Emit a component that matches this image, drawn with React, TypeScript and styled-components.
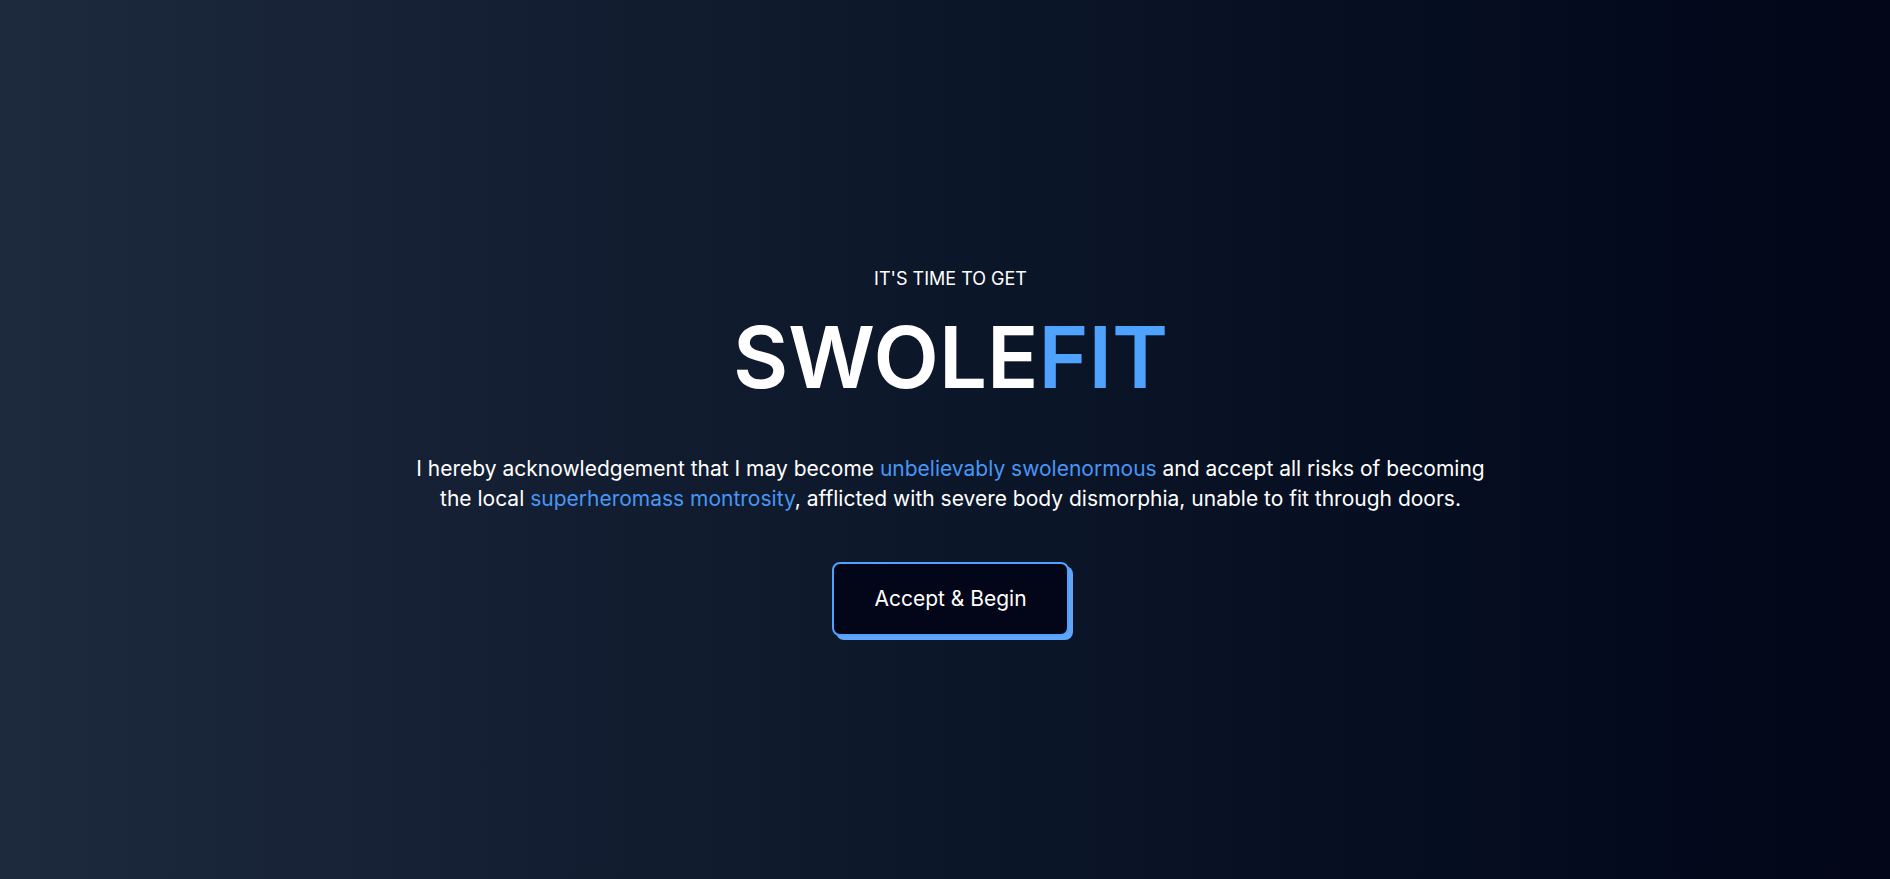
import React from "react";
import styled, { createGlobalStyle } from "styled-components";

const GlobalStyle = createGlobalStyle`
  *, *::before, *::after { box-sizing: border-box; }
  body {
    margin: 0;
    color: #ffffff;
    font-family: Inter, "Open Sans", "Liberation Sans", sans-serif;
    font-size: 21px;
    line-height: 30px;
  }
  h1, p { margin: 0; }
`;

const Page = styled.main`
  min-height: 100vh;
  display: flex;
  background: linear-gradient(to right in oklab, #1d293d, #020618);
`;

const Hero = styled.section`
  flex: 1;
  display: flex;
  flex-direction: column;
  align-items: center;
  justify-content: center;
  gap: 48px;
  padding: 29px 16px 8px 27px;
  text-align: center;
`;

const Heading = styled.div`
  display: flex;
  flex-direction: column;
  gap: 16px;
`;

const Kicker = styled.p`
  font-size: 18px;
  text-transform: uppercase;
`;

const Title = styled.h1`
  font-size: 85px;
  font-weight: 600;
  line-height: 96px;
`;

const Brand = styled.span`
  color: #50a2ff;
`;

const Copy = styled.p`
  max-width: 1100px;
`;

const Highlight = styled.span`
  color: #4896f5;
`;

const StartButton = styled.button`
  padding: 20px 40px;
  border: 2px solid #50a2ff;
  border-radius: 8px;
  background: #020618;
  box-shadow: 4px 4px 0 #60a5fa;
  color: inherit;
  font: inherit;
  cursor: pointer;
`;

export default function App() {
  return (
    <>
      <GlobalStyle />
      <Page>
        <Hero>
          <Heading>
            <Kicker>It's time to get</Kicker>
            <Title>
              SWOLE<Brand>FIT</Brand>
            </Title>
          </Heading>
          <Copy>
            I hereby acknowledgement that I may become{" "}
            <Highlight>unbelievably swolenormous</Highlight> and accept all
            risks of becoming the local{" "}
            <Highlight>superheromass montrosity</Highlight>, afflicted with
            severe body dismorphia, unable to fit through doors.
          </Copy>
          <StartButton type="button">Accept &amp; Begin</StartButton>
        </Hero>
      </Page>
    </>
  );
}
